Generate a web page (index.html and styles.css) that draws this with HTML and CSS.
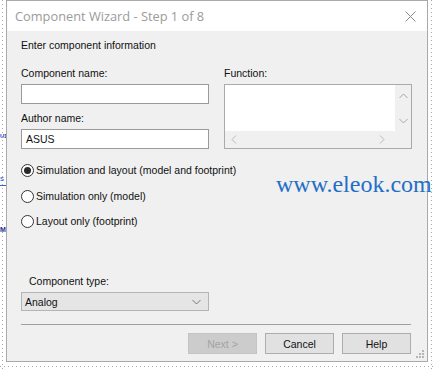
FILE: index.html
```html
<!DOCTYPE html>
<html lang="en">
<head>
    <meta charset="UTF-8">
    <title>Component Wizard - Step 1 of 8</title>
    <link rel="stylesheet" href="styles.css">
</head>
<body>
    <!-- bits of the schematic showing behind the dialog -->
    <div class="sheet">
        <span class="sheet-text sheet-u1">U1</span>
        <span class="sheet-text sheet-s">s</span>
        <span class="sheet-wire"></span>
        <span class="sheet-text sheet-m">M</span>
    </div>

    <div class="window">
        <div class="titlebar">
            <span class="title">Component Wizard - Step 1 of 8</span>
            <span class="close">
                <svg width="11" height="11" viewBox="0 0 11 11">
                    <path d="M0.5 0.5 L10.5 10.5 M10.5 0.5 L0.5 10.5" stroke="#8a8a8a" stroke-width="1" fill="none"/>
                </svg>
            </span>
        </div>

        <div class="content">
            <div class="heading">Enter component information</div>

            <div class="fields">
                <div class="col">
                    <label class="label">Component name:</label>
                    <div class="input"></div>
                    <label class="label label-gap">Author name:</label>
                    <div class="input">ASUS</div>
                </div>
                <div class="col">
                    <label class="label">Function:</label>
                    <div class="textarea">
                        <div class="ta-text"></div>
                        <div class="vscroll">
                            <svg width="9" height="6" viewBox="0 0 9 6"><path d="M0.5 5 L4.5 1 L8.5 5" stroke="#a6a6a6" fill="none"/></svg>
                            <svg width="9" height="6" viewBox="0 0 9 6"><path d="M0.5 1 L4.5 5 L8.5 1" stroke="#a6a6a6" fill="none"/></svg>
                        </div>
                        <div class="hscroll">
                            <svg width="6" height="9" viewBox="0 0 6 9"><path d="M5 0.5 L1 4.5 L5 8.5" stroke="#b8b8b8" fill="none"/></svg>
                            <svg width="6" height="9" viewBox="0 0 6 9"><path d="M1 0.5 L5 4.5 L1 8.5" stroke="#b8b8b8" fill="none"/></svg>
                        </div>
                        <div class="corner"></div>
                    </div>
                </div>
            </div>

            <div class="radios">
                <div class="radio-row first"><span class="radio checked"></span>Simulation and layout (model and footprint)</div>
                <div class="radio-row"><span class="radio"></span>Simulation only (model)</div>
                <div class="radio-row"><span class="radio"></span>Layout only (footprint)</div>
            </div>

            <div class="type-group">
                <label class="label type-label">Component type:</label>
                <div class="select">
                    <span>Analog</span>
                    <svg width="9" height="6" viewBox="0 0 9 6"><path d="M0.5 1 L4.5 5 L8.5 1" stroke="#777" fill="none"/></svg>
                </div>
            </div>

            <div class="separator"></div>

            <div class="buttons">
                <button class="btn" disabled>Next &gt;</button>
                <button class="btn">Cancel</button>
                <button class="btn">Help</button>
            </div>
        </div>
        <span class="grip">
            <svg width="8" height="8" viewBox="0 0 8 8" fill="#b5b5b5">
                <rect x="6" y="0" width="2" height="2"/>
                <rect x="3" y="3" width="2" height="2"/><rect x="6" y="3" width="2" height="2"/>
                <rect x="0" y="6" width="2" height="2"/><rect x="3" y="6" width="2" height="2"/><rect x="6" y="6" width="2" height="2"/>
            </svg>
        </span>
    </div>

    <div class="watermark">www.eleok.com</div>
</body>
</html>
```

FILE: styles.css
```css
body {
    margin: 0;
    width: 434px;
    height: 370px;
    overflow: hidden;
    position: relative;
    font-family: "Liberation Sans", Arial, sans-serif;
    font-size: 10.5px;
    color: #111;
    background-color: #fff;
    background-image:
        repeating-linear-gradient(to bottom, #a8a8a8 0 1px, transparent 1px 4px),
        repeating-linear-gradient(to bottom, #a8a8a8 0 1px, transparent 1px 4px),
        repeating-linear-gradient(to right, #a8a8a8 0 1px, transparent 1px 4px);
    background-size: 1px 100%, 1px 100%, 100% 1px;
    background-position: 2px 0, 431px 0, 0 366px;
    background-repeat: no-repeat;
}
.sheet-text {
    position: absolute;
    left: 0;
    font-family: "Liberation Sans", Arial, sans-serif;
    font-weight: bold;
    font-size: 6px;
    letter-spacing: -0.5px;
    color: #2b4fc0;
}
.sheet-u1 { top: 133px; }
.sheet-s { top: 174px; font-weight: normal; font-size: 8px; }
.sheet-m { top: 226px; font-size: 7px; color: #1a2f9a; }
.sheet-wire {
    position: absolute;
    left: 0;
    top: 185px;
    width: 6px;
    height: 1px;
    background: #3b5fd0;
}

.window {
    position: relative;
    margin-left: 6px;
    width: 420px;
    height: 360px;
    border: 1px solid #a9a9a9;
    background: #f0f0f0;
}
.titlebar {
    height: 30px;
    background: #fff;
    display: flex;
    align-items: center;
    justify-content: space-between;
    padding: 0 11px 0 8px;
}
.title {
    font-family: "Open Sans", sans-serif;
    font-size: 12.8px;
    color: #9b9b9b;
}
.close {
    display: flex;
}

.content {
    padding: 7px 15px 0 14px;
}
.heading {
    line-height: 14px;
}
.fields {
    margin-top: 14px;
    display: grid;
    grid-template-columns: 188px 188px;
    column-gap: 15px;
}
.col {
    display: flex;
    flex-direction: column;
}
.label {
    display: block;
    line-height: 14px;
    margin-bottom: 4px;
}
.label-gap {
    margin-top: 7px;
}
.input {
    height: 18px;
    border: 1px solid #9a9a9a;
    background: #fff;
    padding: 0 4px;
    line-height: 18px;
}
.textarea {
    height: 63px;
    border: 1px solid #aaa;
    background: #fff;
    display: grid;
    grid-template-columns: 1fr 16px;
    grid-template-rows: 1fr 17px;
}
.vscroll {
    background: #f0f0f0;
    display: flex;
    flex-direction: column;
    justify-content: space-between;
    align-items: center;
    padding: 8px 0 7px;
}
.hscroll {
    background: #f0f0f0;
    display: flex;
    justify-content: space-between;
    align-items: center;
    padding: 0 10px 0 6px;
}
.corner {
    background: #f0f0f0;
}

.radios {
    margin-top: 13px;
}
.radio-row {
    display: flex;
    align-items: center;
    height: 16px;
    margin-top: 9px;
}
.radio-row.first {
    margin-top: 0;
}
.radio-row:nth-child(2) {
    margin-top: 10px;
}
.radio {
    box-sizing: border-box;
    width: 13px;
    height: 13px;
    border: 1px solid #333;
    border-radius: 50%;
    background: #fff;
    margin-right: 2px;
    display: flex;
    align-items: center;
    justify-content: center;
}
.radio.checked::after {
    content: "";
    width: 7px;
    height: 7px;
    border-radius: 50%;
    background: #2a2a2a;
}

.type-group {
    margin-top: 45px;
    width: 188px;
}
.type-label {
    padding-left: 8px;
}
.select {
    height: 17px;
    border: 1px solid #b4b4b4;
    background: #e5e5e5;
    display: flex;
    align-items: center;
    justify-content: space-between;
    padding: 0 7px 0 3px;
}

.separator {
    margin-top: 13px;
    height: 1px;
    background: #a0a0a0;
    width: 390px;
}
.buttons {
    margin-top: 8px;
    display: flex;
    justify-content: flex-end;
    gap: 8px;
    padding-right: 1px;
}
.btn {
    width: 69px;
    height: 21px;
    border: 1px solid #adadad;
    background: #e1e1e1;
    font-family: "Liberation Sans", Arial, sans-serif;
    font-size: 10.5px;
    color: #111;
    padding: 0;
}
.btn:disabled {
    background: #cccccc;
    border-color: #c4c4c4;
    color: #a3a3a3;
}
.grip {
    position: absolute;
    right: 3px;
    bottom: 3px;
    display: flex;
}

.watermark {
    position: absolute;
    left: 276px;
    top: 171px;
    font-family: "Liberation Serif", serif;
    font-size: 24px;
    color: #1f6fc6;
    white-space: nowrap;
}
```
